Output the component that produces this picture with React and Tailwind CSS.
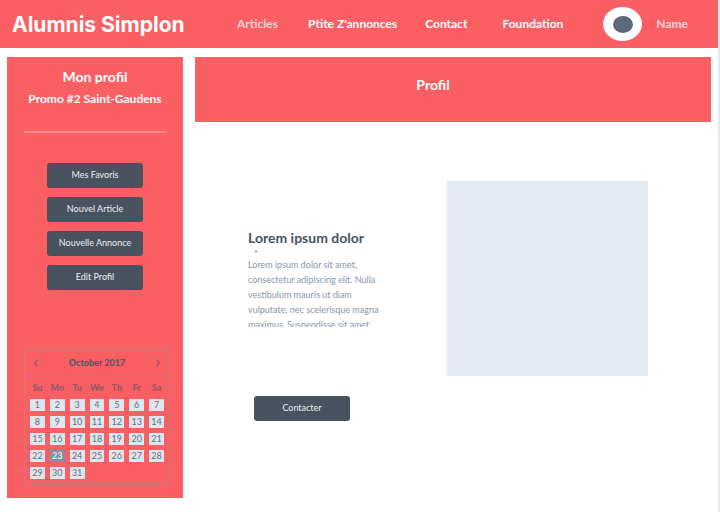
import { ChevronLeft, ChevronRight } from "lucide-react";

const links = ["Articles", "Ptite Z'annonces", "Contact", "Foundation"];
const actions = ["Mes Favoris", "Nouvel Article", "Nouvelle Annonce", "Edit Profil"];
const weekdays = ["Su", "Mo", "Tu", "We", "Th", "Fr", "Sa"];
const weeks = [0, 7, 14, 21, 28].map((start) =>
  weekdays.map((_, i) => start + i + 1).filter((day) => day <= 31)
);

function ActionButton({ children }) {
  return (
    <button type="button" className="h-[25px] w-24 rounded-[3px] bg-[#49535f] pb-0.5 text-[9px] leading-4 text-[#eceef1]">
      {children}
    </button>
  );
}

function Header() {
  return (
    <header className="flex h-12 items-center bg-[#fa5f63] pl-3 pr-[30px] font-bold text-white">
      <h1 className="w-[225px] shrink-0 pt-0.5 font-[Inter,sans-serif] text-[21px] leading-6">Alumnis Simplon</h1>
      <nav className="flex grow gap-7 text-[12px] leading-4">
        {links.map((link) => (
          <a key={link} href="#" className="text-white first:w-[43px] first:text-[#fed5d6] last:ml-auto">
            {link}
          </a>
        ))}
      </nav>
      <a href="#" className="ml-10 flex items-center gap-3.5 text-[12px] leading-4 text-[#fed5d6]">
        <span className="flex h-[34px] w-[39px] items-center justify-center rounded-[50%] bg-white">
          <span className="h-[17px] w-5 rounded-[50%] bg-[#5b6a79]" />
        </span>
        Name
      </a>
    </header>
  );
}

function Calendar() {
  return (
    <section className="w-[146px] border border-[#cf777f] text-[#4f5a67]">
      <div className="flex h-[26px] items-center justify-between border-b border-[#bf737c] px-[5px]">
        <button type="button" aria-label="Previous month">
          <ChevronLeft size={12} strokeWidth={2} />
        </button>
        <h3 className="text-[9px] font-black leading-4">October 2017</h3>
        <button type="button" aria-label="Next month">
          <ChevronRight size={12} strokeWidth={2} />
        </button>
      </div>
      <table className="w-full table-fixed border-separate border-spacing-[5px] text-center">
        <thead>
          <tr>
            {weekdays.map((day) => (
              <th key={day} className="h-[13px] p-0 text-[9px] font-black leading-3 text-[#935966]">
                <span className="flex justify-center">{day}</span>
              </th>
            ))}
          </tr>
        </thead>
        <tbody>
          {weeks.map((week) => (
            <tr key={week[0]}>
              {week.map((day) => (
                <td
                  key={day}
                  className={
                    day === 23
                      ? "h-3 bg-[#8590a5] p-0 text-[9px] leading-3 text-white"
                      : "h-3 bg-[#e0e6ee] p-0 text-[9px] leading-3 text-[#656f7c]"
                  }
                >
                  {day}
                </td>
              ))}
            </tr>
          ))}
        </tbody>
      </table>
    </section>
  );
}

function Sidebar() {
  return (
    <aside className="flex w-44 shrink-0 flex-col bg-[#fa5f63] px-[17px] pb-[13px] pt-2 text-white">
      <h2 className="text-center text-[14px] font-bold leading-6">Mon profil</h2>
      <p className="whitespace-nowrap text-center text-[12px] font-bold leading-5">Promo #2 Saint-Gaudens</p>
      <hr className="mt-[22px] border-t-2 border-[#fc8b8e]" />
      <div className="mt-[30px] flex flex-col items-center gap-[9px]">
        {actions.map((label) => (
          <ActionButton key={label}>{label}</ActionButton>
        ))}
      </div>
      <div className="mt-[59px]">
        <Calendar />
      </div>
    </aside>
  );
}

function Profile() {
  return (
    <main className="grow">
      <div className="h-[65px] bg-[#fa5f63] pt-[18px] text-center text-white">
        <h2 className="pr-10 text-[14px] font-bold leading-5">Profil</h2>
      </div>
      <div className="flex justify-between pl-[53px] pr-[63px] pt-[59px]">
        <article className="w-[133px] pt-12">
          <h3 className="h-[23px] overflow-hidden text-[14px] font-bold leading-[18px] text-[#49535f]">
            Lorem ipsum dolor sit
          </h3>
          <p className="mt-[5px] h-[70px] overflow-hidden text-[9px] leading-[15px] text-[#8895ab]">
            Lorem ipsum dolor sit amet, consectetur adipiscing elit. Nulla vestibulum mauris ut diam
            vulputate, nec scelerisque magna maximus. Suspendisse sit amet
          </p>
          <div className="mt-[69px] flex pl-1.5">
            <ActionButton>Contacter</ActionButton>
          </div>
        </article>
        <div className="h-[195px] w-[201px] bg-[#e4e9f2]" />
      </div>
    </main>
  );
}

export default function App() {
  return (
    <div className="min-h-screen border-r-2 border-[#e2e9ee] bg-white font-[Lato,sans-serif]">
      <Header />
      <div className="flex gap-3 pb-[14px] pl-[7px] pr-[7px] pt-[9px]">
        <Sidebar />
        <Profile />
      </div>
    </div>
  );
}
